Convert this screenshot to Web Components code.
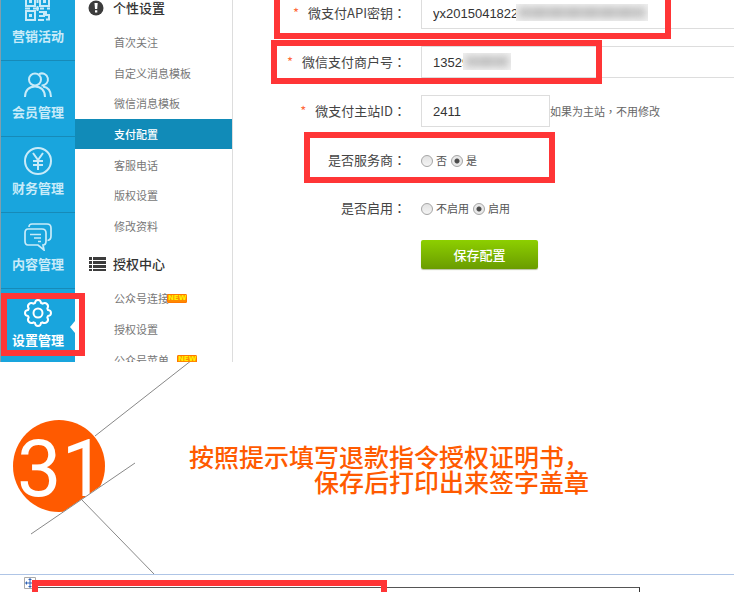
<!DOCTYPE html>
<html lang="zh-CN">
<head>
<meta charset="utf-8">
<meta name="viewport" content="width=device-width, initial-scale=1">
<title>支付配置</title>
<style>
  body {
    margin: 0;
    background: #fff;
    color: #444;
    font-family: "Noto Sans CJK SC", sans-serif;
    overflow-x: hidden;
  }
</style>
</head>
<body>

<guide-page></guide-page>

<script>
const define = (name, html, setup) => {
  const $template = document.createElement('template')
  $template.innerHTML = html

  customElements.define(name, class extends HTMLElement {
    constructor() {
      super()
      this.attachShadow({ mode: 'open' })
    }

    connectedCallback() {
      if (this.shadowRoot.childNodes.length) return
      this.shadowRoot.appendChild($template.content.cloneNode(true))
      if (setup) setup(this, this.shadowRoot)
    }
  })
}

// blue column on the left: one entry
define('nav-item', `
  <style>
    :host { display: block; }
    a {
      box-sizing: border-box;
      display: flex;
      flex-direction: column;
      align-items: center;
      gap: 4px;
      height: 76px;
      padding-top: 10px;
      border-top: 1px solid #178ab8;
      color: #c8ebf9;
      font-size: 13px;
      line-height: 18px;
      font-weight: 700;
      text-decoration: none;
      position: relative;
    }
    :host([active]) a { color: #fff; }
    :host([active]) a::after {
      content: "";
      position: absolute;
      right: 0;
      top: 32px;
      border: 6px solid transparent;
      border-left: 0;
      border-right: 5px solid #fff;
    }
    ::slotted(svg) { display: block; width: 28px; height: 28px; }
  </style>
  <a href="#"><slot name="icon"></slot><span><slot></slot></span></a>
`)

define('side-nav', `
  <style>
    :host {
      display: block;
      background: #19a5dd;
      border-left: 1px solid #7f9fae;
    }
    nav { margin-top: -16px; }
    svg { fill: none; stroke: currentColor; stroke-width: 2; color: #c8ebf9; }
    [active] svg { color: #fff; }
  </style>
  <nav>
    <nav-item>
      <svg slot="icon" viewBox="0 0 28 28">
        <path d="M2 2h9v9H2zM16 2h9v9h-9zM2 16h9v9H2z"/>
        <path stroke-width="3" d="M5 6.500h3M19 6.500h3M5 20.500h3"/>
        <path d="M1 13.500h5M9 13.500h6M13.500 1v7M13.500 11v5M16 13.500h4M23 13.500h3M15 17h5v4h-5M22 16v4h4M14 25h6M22 24.500h4M25 21v4"/>
      </svg>
      营销活动
    </nav-item>
    <nav-item>
      <svg slot="icon" viewBox="0 0 28 28">
        <circle cx="11" cy="8.500" r="6"/>
        <path d="M1 26c0-6.500 4-10.500 10-10.500S21 19.500 21 26M15 3.200a6 6 0 1 1 2.500 11.200M19 15.500c5 .8 8 4.500 8 10.500"/>
      </svg>
      会员管理
    </nav-item>
    <nav-item>
      <svg slot="icon" viewBox="0 0 28 28">
        <circle cx="14" cy="14" r="13"/>
        <path d="M9 6l5 7 5-7M14 13v10M9 14h10M9 18h10"/>
      </svg>
      财务管理
    </nav-item>
    <nav-item>
      <svg slot="icon" viewBox="0 0 28 28">
        <path stroke-width="1.700" d="M5 4Q5 1 8 1h15q4 0 4 4v8q0 4-3.500 4.500"/>
        <path stroke-width="1.700" d="M4 6h14q4 0 4 4v8q0 4-3 4l1 5-6-5H4q-3 0-3-4v-8q0-4 3-4z"/>
        <path d="M6 11.500h11M10 15h7M14 18.500h3" stroke-width="1.500"/>
      </svg>
      内容管理
    </nav-item>
    <nav-item active>
      <svg slot="icon" viewBox="0 0 28 28">
        <circle cx="14" cy="14" r="4.500"/>
        <path stroke-linejoin="round" d="M11 4Q11.300 1 14 1T17 4L18.500 4.700Q21 3 23 5T23.300 9.500L24 11Q27 11.300 27 14T24 17L23.300 18.500Q25 21 23 23T18.500 23.300L17 24Q16.700 27 14 27T11 24L9.500 23.300Q7 25 5 23T4.700 18.500L4 17Q1 16.700 1 14T4 11L4.700 9.500Q3 7 5 5T9.500 4.700Z"/>
      </svg>
      设置管理
    </nav-item>
  </nav>
`)

define('new-tag', `
  <style>
    :host {
      display: block;
      box-sizing: border-box;
      width: 20px;
      height: 9px;
      border: 1px solid #ff7800;
      border-radius: 1px;
      background: #ff8a00;
      color: #fff200;
      font: 700 7px/7px "DejaVu Sans", sans-serif;
      text-align: center;
    }
  </style>
  NEW
`)

define('menu-link', `
  <style>
    :host { display: grid; }
    a {
      display: flex;
      align-items: center;
      padding-left: 39px;
      color: #777;
      font-size: 11px;
      line-height: 16px;
      text-decoration: none;
    }
    :host([active]) a { background: #118bb8; color: #fff; font-weight: 500; }
    ::slotted(new-tag) { margin-left: -2px; }
    ::slotted(new-tag.apart) { margin-left: 8px; }
  </style>
  <a href="#"><slot></slot></a>
`)

define('menu-group', `
  <style>
    :host { display: block; }
    h2 {
      box-sizing: border-box;
      display: flex;
      align-items: center;
      gap: 7px;
      height: 42px;
      margin: 0;
      padding: 4px 0 0 13px;
      color: #333;
      font-size: 13px;
      line-height: 18px;
      font-weight: 500;
    }
    div { display: grid; grid-auto-rows: 1fr; height: var(--list-height); }
    ::slotted(svg) { width: 18px; height: 16px; fill: #3c3c3c; }
  </style>
  <h2><slot name="icon"></slot><slot name="title"></slot></h2>
  <div><slot></slot></div>
`)

define('side-menu', `
  <style>
    :host { display: block; border-right: 1px solid #ddd; }
    nav { margin-top: -15px; }
    menu-group { --list-height: 214px; }
    menu-group + menu-group { --list-height: 92px; }
  </style>
  <nav>
    <menu-group>
      <svg slot="icon" viewBox="0 0 18 16">
        <circle cx="8" cy="8" r="7.500"/>
        <path fill="#fff" d="M6.500 3h3.200l-.5 6H7zM7 10.300h2.300v2.300H7z"/>
      </svg>
      <span slot="title">个性设置</span>
      <menu-link>首次关注</menu-link>
      <menu-link>自定义消息模板</menu-link>
      <menu-link>微信消息模板</menu-link>
      <menu-link active>支付配置</menu-link>
      <menu-link>客服电话</menu-link>
      <menu-link>版权设置</menu-link>
      <menu-link>修改资料</menu-link>
    </menu-group>
    <menu-group>
      <svg slot="icon" viewBox="0 0 18 16">
        <path d="M1 1h3v3H1zM5 1h13v3H5zM1 5h3v3H1zM5 5h13v3H5zM1 9h3v3H1zM5 9h13v3H5zM1 13h3v2H1zM5 13h13v2H5z"/>
      </svg>
      <span slot="title">授权中心</span>
      <menu-link>公众号连接<new-tag></new-tag></menu-link>
      <menu-link>授权设置</menu-link>
      <menu-link>公众号菜单<new-tag class="apart"></new-tag></menu-link>
    </menu-group>
  </nav>
`)

const rowStyle = `
  :host {
    display: grid;
    grid-template-columns: 173px 1fr;
    column-gap: 15px;
    align-items: center;
    color: #444;
    font-size: 13px;
    line-height: 18px;
  }
  .name { text-align: right; }
  .colon { font-family: "Noto Sans CJK TC", sans-serif; }
`

define('text-row', `
  <style>
    ${rowStyle}
    .name::before { content: "*"; margin-right: 9px; color: #ff6a3c; }
    .box { display: flex; align-items: center; position: relative; }
    input {
      box-sizing: border-box;
      width: 100%;
      height: 32px;
      margin: 0;
      padding: 0 11px;
      border: 1px solid #ddd;
      border-right: 0;
      background: #fff;
      color: #333;
      font: 13px "Liberation Sans", sans-serif;
      outline: 0;
    }
    :host([short]) input { width: 129px; border-right: 1px solid #ddd; }
    .hint { color: #666; font-size: 11px; line-height: 16px; }
    /* covers the private tail of the value */
    .mask {
      display: none;
      position: absolute;
      top: 7px;
      height: 17px;
      overflow: hidden;
      background: #f1f1f1;
    }
    .mask::before {
      content: "";
      position: absolute;
      inset: 4px 3px;
      background: repeating-linear-gradient(100deg, #b0b0b0 0 7px, #c2c2c2 10px 12px, #b8b8b8 17px);
      filter: blur(4px);
    }
    :host([mask=long]) .mask { display: block; left: 95px; width: 132px; }
    :host([mask=short]) .mask { display: block; left: 42px; width: 48px; }
  </style>
  <label class="name" for="field"><slot></slot><span class="colon" lang="zh-TW">：</span></label>
  <div class="box">
    <input id="field" type="text">
    <span class="mask"></span>
    <span class="hint"><slot name="hint"></slot></span>
  </div>
`, (host, root) => {
  root.querySelector('input').value = host.getAttribute('value')
})

define('radio-row', `
  <style>
    ${rowStyle}
    :host { height: 31px; }
    .options { display: flex; gap: 4px; }
    label { display: flex; align-items: center; gap: 3px; color: #555; font-size: 11px; line-height: 16px; }
    input {
      appearance: none;
      box-sizing: border-box;
      width: 12px;
      height: 12px;
      margin: 2px 0 0;
      border: 1px solid #a5a5a5;
      border-radius: 50%;
      background: linear-gradient(#e2e2e2, #f4f4f4);
    }
    input:checked { background: radial-gradient(circle, #4c4c4c 0 2px, #e9e9e9 3px); }
  </style>
  <span class="name" id="name"><slot></slot><span class="colon" lang="zh-TW">：</span></span>
  <div class="options" role="radiogroup" aria-labelledby="name"></div>
`, (host, root) => {
  const $options = root.querySelector('.options')
  host.getAttribute('options').split(',').forEach((text, i) => {
    const $label = document.createElement('label')
    const $input = document.createElement('input')
    $input.type = 'radio'
    $input.name = 'choice'
    $input.checked = i === 1
    $label.append($input, text)
    $options.appendChild($label)
  })
})

define('pay-form', `
  <style>
    :host { display: block; min-width: 0; }
    form { display: flex; flex-direction: column; gap: 17px; margin-top: -3px; }
    .comma { font-family: "Noto Sans CJK TC", sans-serif; }
    button {
      align-self: flex-start;
      width: 117px;
      height: 29px;
      margin-left: 188px;
      padding: 0;
      border: 0;
      border-radius: 2px;
      background: linear-gradient(#8dcf00, #6a9c00);
      box-shadow: 0 1px 1px #b9c3a2;
      color: #fff;
      font: 500 13px/18px "Noto Sans CJK SC", sans-serif;
    }
  </style>
  <form>
    <text-row value="yx2015041822" mask="long">微支付API密钥</text-row>
    <text-row value="13529" mask="short">微信支付商户号</text-row>
    <text-row value="2411" short>微支付主站ID<span slot="hint">如果为主站<span class="comma" lang="zh-TW">，</span>不用修改</span></text-row>
    <radio-row options="否,是">是否服务商</radio-row>
    <radio-row options="不启用,启用">是否启用</radio-row>
    <button type="button">保存配置</button>
  </form>
`)

// red frame laid over the part to look at
define('red-mark', `
  <style>
    :host {
      box-sizing: border-box;
      position: absolute;
      border: 6px solid #ff3536;
      pointer-events: none;
    }
  </style>
`)

define('admin-screen', `
  <style>
    :host {
      display: grid;
      grid-template-columns: 75px 158px 1fr;
      height: 362px;
      overflow: hidden;
      position: relative;
    }
    .key { left: 274px; top: -12px; width: 397px; height: 51px; }
    .shop { left: 271px; top: 40px; width: 331px; height: 44px; }
    .provider { left: 304px; top: 132px; width: 251px; height: 51px; }
    .settings { left: 1px; top: 293px; width: 84px; height: 63px; }
  </style>
  <side-nav></side-nav>
  <side-menu></side-menu>
  <pay-form></pay-form>
  <red-mark class="key"></red-mark>
  <red-mark class="shop"></red-mark>
  <red-mark class="provider"></red-mark>
  <red-mark class="settings"></red-mark>
`)

define('step-title', `
  <style>
    :host { display: grid; grid-template-columns: 189px 1fr; height: 212px; }
    svg { display: block; width: 200px; height: 212px; overflow: visible; }
    circle { fill: #ff5a00; }
    text { fill: #fff; font: 79px Roboto, sans-serif; }
    .cut { fill: #fff; }
    .line { fill: none; stroke: #888; }
    h1 {
      margin: 82px 0 0;
      color: #ff5a00;
      font-size: 25px;
      line-height: 25px;
      font-weight: 500;
      white-space: nowrap;
    }
    h1 span { display: block; }
    h1 span + span { padding-left: 5em; }
  </style>
  <svg viewBox="0 0 200 212">
    <circle cx="59" cy="104" r="46"/>
    <text x="17" y="134">31</text>
    <path class="cut" d="M31 172L134 101V172z"/>
    <path class="line" d="M95 74L192 -2M31 172L135 101M81 137L154 212"/>
  </svg>
  <h1><span>按照提示填写退款指令授权证明书，</span><span>保存后打印出来签字盖章</span></h1>
`)

define('doc-sheet', `
  <style>
    :host {
      box-sizing: border-box;
      display: block;
      height: 18px;
      padding: 12px 94px 0 37px;
      border-top: 1px solid #afc5e6;
      overflow: hidden;
      position: relative;
    }
    .table { height: 20px; border: 1px solid #333; border-top-color: #555; }
    svg { position: absolute; left: 24px; top: 2px; width: 12px; height: 12px; }
    red-mark { left: 32px; top: 5px; width: 355px; height: 40px; }
  </style>
  <div class="table"></div>
  <svg viewBox="0 0 12 12">
    <path fill="#fff" stroke="#aaa" d="M.5.5h11v11H.5z"/>
    <path stroke="#2f62b5" d="M6 2v8M2 6h8"/>
    <path fill="#2f62b5" d="M6 1l2 2H4zM6 11l2-2H4zM1 6l2-2v4zM11 6L9 4v4z"/>
  </svg>
  <red-mark></red-mark>
`)

define('guide-page', `
  <style>
    :host { display: block; }
  </style>
  <admin-screen></admin-screen>
  <step-title></step-title>
  <doc-sheet></doc-sheet>
`)
</script>
</body>
</html>
